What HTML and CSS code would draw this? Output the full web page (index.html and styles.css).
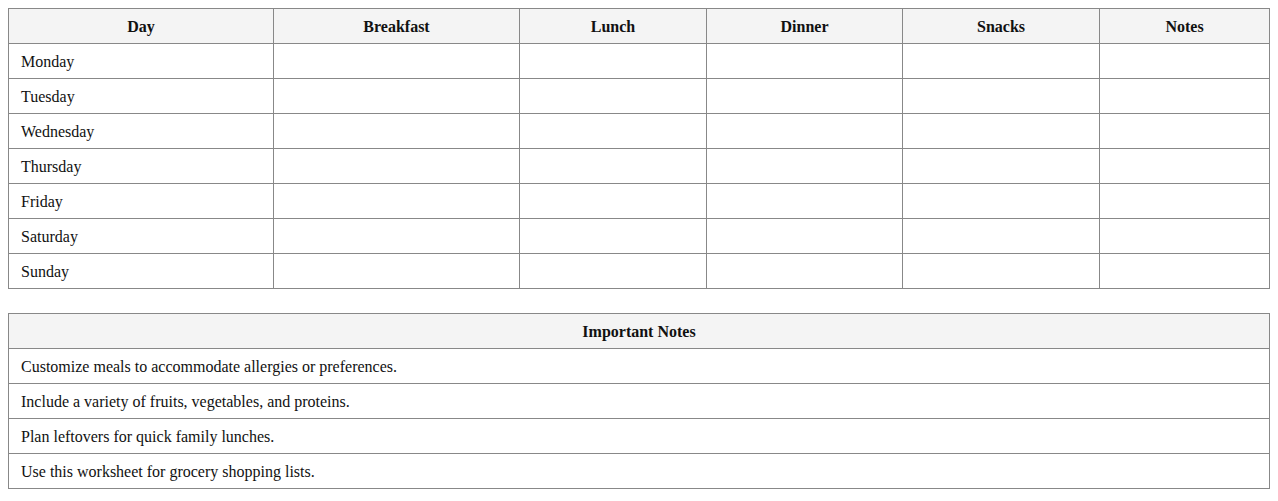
FILE: index.html
```html
<!DOCTYPE html>
<html>
<head>
<meta charset="utf-8">
<link rel="stylesheet" href="styles.css">
</head>
<body>
<table class="grid meals">
  <colgroup>
    <col class="c-day"><col class="c-breakfast"><col class="c-lunch"><col class="c-dinner"><col class="c-snacks"><col class="c-notes">
  </colgroup>
  <thead>
    <tr><th>Day</th><th>Breakfast</th><th>Lunch</th><th>Dinner</th><th>Snacks</th><th>Notes</th></tr>
  </thead>
  <tbody>
    <tr><td>Monday</td><td></td><td></td><td></td><td></td><td></td></tr>
    <tr><td>Tuesday</td><td></td><td></td><td></td><td></td><td></td></tr>
    <tr><td>Wednesday</td><td></td><td></td><td></td><td></td><td></td></tr>
    <tr><td>Thursday</td><td></td><td></td><td></td><td></td><td></td></tr>
    <tr><td>Friday</td><td></td><td></td><td></td><td></td><td></td></tr>
    <tr><td>Saturday</td><td></td><td></td><td></td><td></td><td></td></tr>
    <tr><td>Sunday</td><td></td><td></td><td></td><td></td><td></td></tr>
  </tbody>
</table>
<table class="grid notes">
  <thead>
    <tr><th>Important Notes</th></tr>
  </thead>
  <tbody>
    <tr><td>Customize meals to accommodate allergies or preferences.</td></tr>
    <tr><td>Include a variety of fruits, vegetables, and proteins.</td></tr>
    <tr><td>Plan leftovers for quick family lunches.</td></tr>
    <tr><td>Use this worksheet for grocery shopping lists.</td></tr>
  </tbody>
</table>
</body>
</html>
```
FILE: styles.css
```css
body {
  margin: 8px;
  font-family: "Liberation Serif", "Times New Roman", serif;
  font-size: 16px;
  color: #111;
  background: #fff;
}
.grid {
  width: 1262px;
  border-collapse: collapse;
  table-layout: fixed;
}
.grid th,
.grid td {
  border: 1px solid #888;
  padding: 9px 12px 7px;
  line-height: 18px;
  height: 18px;
}
.grid th {
  background: #f4f4f4;
  font-weight: bold;
  text-align: center;
}
.grid td {
  text-align: left;
}
.meals {
  margin-bottom: 24px;
}
.c-day { width: 265px; }
.c-breakfast { width: 246px; }
.c-lunch { width: 187px; }
.c-dinner { width: 196px; }
.c-snacks { width: 197px; }
.c-notes { width: 170px; }
```
